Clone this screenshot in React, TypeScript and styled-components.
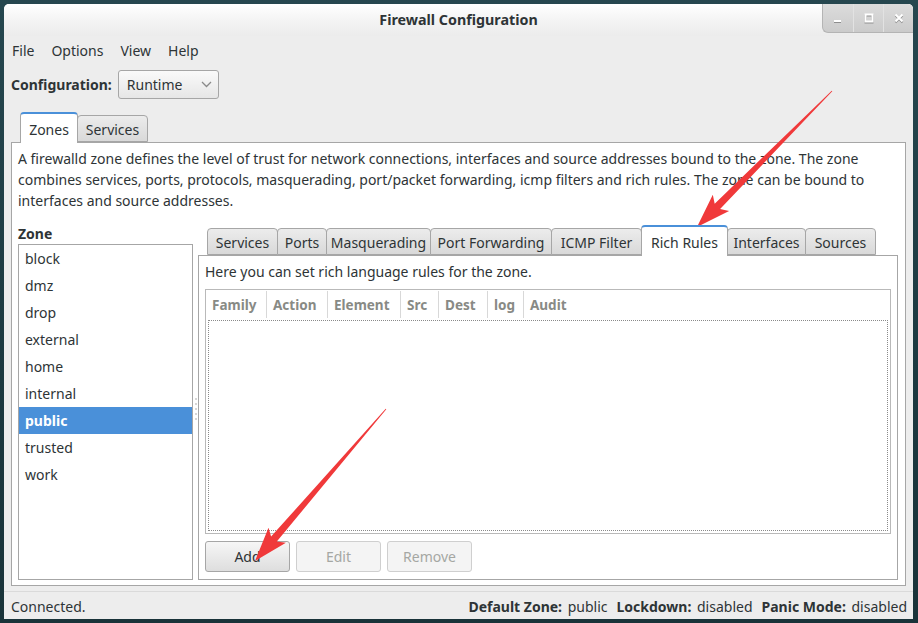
import React from "react";
import styled, { createGlobalStyle } from "styled-components";

const FONT = `"Noto Sans", "Open Sans", "DejaVu Sans", sans-serif`;
const TEXT = "#2e3436";
const BORDER = "#a6a6a6";

const Global = createGlobalStyle`
  html, body { margin: 0; padding: 0; }
  body { background: #1e3c44; font-family: ${FONT}; width: 918px; height: 623px; overflow: hidden; }
  * { box-sizing: border-box; }
`;

const Desktop = styled.div`
  position: relative;
  width: 918px;
  height: 623px;
  padding: 4px 5px 4px 4px;
  background: linear-gradient(180deg, #26474f 0%, #1c3940 60%, #193339 100%);
`;

const Window = styled.div`
  width: 909px;
  height: 615px;
  display: flex;
  flex-direction: column;
  background: #ededed;
  border-radius: 5px 5px 0 0;
  overflow: hidden;
  color: ${TEXT};
  font-size: 14px;
`;

const TitleBar = styled.div`
  height: 32px;
  flex: none;
  display: grid;
  grid-template-columns: 1fr auto 1fr;
  background: linear-gradient(180deg, #ffffff 0%, #f3f3f3 55%, #ececec 100%);
`;

const Title = styled.div`
  grid-column: 2;
  align-self: center;
  font-weight: bold;
  font-size: 14.3px;
  color: #2e3436;
  margin-top: -2px;
`;

const Controls = styled.div`
  grid-column: 3;
  justify-self: end;
  display: flex;
  height: 29px;
  border-bottom-left-radius: 6px;
  overflow: hidden;
  border-left: 1px solid #b4b4b4;
  border-bottom: 1px solid #b4b4b4;
  background: linear-gradient(180deg, #dcdcdc 0%, #cbcbcb 100%);
`;

const CtrlButton = styled.div<{ $first?: boolean }>`
  width: 30px;
  height: 100%;
  display: flex;
  align-items: center;
  justify-content: center;
  border-left: ${(p) => (p.$first ? "none" : "1px solid #e2e2e2")};
  svg { filter: drop-shadow(0 1px 0 #8e8e8e); }
`;

const MenuBar = styled.div`
  height: 28px;
  flex: none;
  display: flex;
  align-items: center;
  gap: 17px;
  padding-left: 8px;
  font-size: 14px;
`;

const MenuItem = styled.span`
  color: ${TEXT};
`;

const ConfigRow = styled.div`
  margin-top: 6px;
  height: 29px;
  flex: none;
  display: flex;
  align-items: center;
  gap: 6px;
  padding-left: 7px;
`;

const ConfigLabel = styled.span`
  font-weight: bold;
  font-size: 14px;
`;

const Combo = styled.div`
  width: 101px;
  height: 29px;
  display: flex;
  align-items: center;
  justify-content: space-between;
  padding: 0 6px 0 8px;
  border: 1px solid ${BORDER};
  border-radius: 3px;
  background: linear-gradient(180deg, #fafafa 0%, #e6e6e6 100%);
  font-size: 14px;
`;

const Notebook = styled.div<{ $outer?: boolean }>`
  display: flex;
  flex-direction: column;
  flex: 1;
  min-height: 0;
  margin: ${(p) => (p.$outer ? "13px 7px 0 7px" : "0")};
`;

const TabStrip = styled.div`
  height: 30px;
  flex: none;
  display: flex;
  align-items: flex-end;
  padding-left: 9px;
  position: relative;
  z-index: 1;
`;

const Tab = styled.div<{ $active?: boolean; $w: number }>`
  width: ${(p) => p.$w}px;
  flex: none;
  height: ${(p) => (p.$active ? 31 : 27)}px;
  margin-bottom: ${(p) => (p.$active ? -1 : 0)}px;
  display: flex;
  align-items: center;
  justify-content: center;
  border: 1px solid ${BORDER};
  border-bottom: ${(p) => (p.$active ? "none" : `1px solid ${BORDER}`)};
  border-top: ${(p) => (p.$active ? "2px solid #4a90d9" : `1px solid ${BORDER}`)};
  border-radius: 4px 4px 0 0;
  margin-right: -1px;
  background: ${(p) =>
    p.$active ? "#ffffff" : "linear-gradient(180deg, #ececec 0%, #d9d9d9 100%)"};
  color: ${TEXT};
  white-space: nowrap;
  font-size: 14px;
  padding-top: 1px;
`;

const Pane = styled.div<{ $outer?: boolean }>`
  flex: 1;
  min-height: 0;
  display: flex;
  flex-direction: column;
  background: #ffffff;
  border: 1px solid ${BORDER};
  padding: ${(p) => (p.$outer ? "5px 7px 5px 6px" : "6px 6px 6px 6px")};
`;

const Description = styled.p`
  margin: 0;
  font-size: 14px;
  line-height: 21px;
`;

const BodyRow = styled.div`
  flex: 1;
  min-height: 0;
  display: flex;
  margin-top: 14px;
`;

const ZoneColumn = styled.div`
  width: 175px;
  flex: none;
  display: flex;
  flex-direction: column;
`;

const ZoneLabel = styled.div`
  height: 19px;
  font-weight: bold;
  font-size: 14px;
  line-height: 18px;
`;

const ZoneList = styled.div`
  flex: 1;
  border: 1px solid ${BORDER};
  background: #fff;
`;

const ZoneItem = styled.div<{ $selected?: boolean }>`
  height: 27px;
  display: flex;
  align-items: center;
  padding-left: 6px;
  font-size: 14px;
  background: ${(p) => (p.$selected ? "#4a90d9" : "transparent")};
  color: ${(p) => (p.$selected ? "#ffffff" : TEXT)};
  font-weight: ${(p) => (p.$selected ? "bold" : "normal")};
`;

const Handle = styled.div`
  width: 5px;
  flex: none;
  display: flex;
  flex-direction: column;
  align-items: center;
  justify-content: center;
  gap: 3px;
  padding-top: 12px;
`;

const HandleDot = styled.span`
  width: 2px;
  height: 2px;
  border-radius: 1px;
  background: #c8c8c8;
`;

const InnerText = styled.div`
  height: 20px;
  line-height: 20px;
  font-size: 14px;
  flex: none;
`;

const Table = styled.div`
  margin-top: 7px;
  flex: 1;
  min-height: 0;
  display: flex;
  flex-direction: column;
  border: 1px solid #b9b9b9;
`;

const HeaderRow = styled.div`
  height: 29px;
  flex: none;
  display: flex;
`;

const HeaderCell = styled.div<{ $w?: number; $last?: boolean }>`
  ${(p) => (p.$w ? `width: ${p.$w}px; flex: none;` : "flex: 1;")}
  display: flex;
  align-items: center;
  padding-left: 6px;
  font-weight: bold;
  font-size: 13.5px;
  color: #888a85;
  border-right: ${(p) => (p.$last ? "none" : "1px solid #d8d8d8")};
  margin: 1px 0;
`;

const DottedArea = styled.div`
  flex: 1;
  margin: 1px 2px 2px 2px;
  border: 1px dotted #8a8a8a;
`;

const ButtonRow = styled.div`
  margin-top: 7px;
  height: 31px;
  flex: none;
  display: flex;
  gap: 7px;
  margin-bottom: 1px;
`;

const Button = styled.div<{ $disabled?: boolean }>`
  width: 85px;
  height: 31px;
  margin-right: -1px;
  display: flex;
  align-items: center;
  justify-content: center;
  border-radius: 3px;
  font-size: 14px;
  border: 1px solid ${(p) => (p.$disabled ? "#cfcfcf" : BORDER)};
  background: ${(p) =>
    p.$disabled ? "#f4f4f4" : "linear-gradient(180deg, #f6f6f6 0%, #dedede 100%)"};
  color: ${(p) => (p.$disabled ? "#a5a7a3" : TEXT)};
`;

const StatusBar = styled.div`
  height: 28px;
  flex: none;
  margin-top: 5px;
  border-top: 1px solid #dadada;
  display: flex;
  align-items: center;
  justify-content: space-between;
  padding: 2px 6px 0 7px;
  font-size: 14px;
`;

const StatusRight = styled.div`
  display: flex;
  gap: 9px;
`;

const B = styled.span`
  font-weight: bold;
  margin-right: 2px;
`;

const Overlay = styled.svg`
  position: absolute;
  left: 0;
  top: 0;
  width: 918px;
  height: 623px;
  pointer-events: none;
`;

function arrow(tx: number, ty: number, px: number, py: number) {
  const dx = px - tx;
  const dy = py - ty;
  const L = Math.hypot(dx, dy);
  const ux = dx / L;
  const uy = dy / L;
  const nx = -uy;
  const ny = ux;
  const headLen = 29;
  const headW = 11.5;
  const shaftW = 3.8;
  const bx = px - ux * headLen;
  const by = py - uy * headLen;
  const cx = px - ux * (headLen + 5);
  const cy = py - uy * (headLen + 5);
  const pts = [
    [tx + nx * 0.4, ty + ny * 0.4],
    [bx + nx * shaftW, by + ny * shaftW],
    [cx + nx * headW, cy + ny * headW],
    [px, py],
    [cx - nx * headW, cy - ny * headW],
    [bx - nx * shaftW, by - ny * shaftW],
    [tx - nx * 0.4, ty - ny * 0.4],
  ];
  return pts.map((p) => `${p[0].toFixed(1)},${p[1].toFixed(1)}`).join(" ");
}

const zones = ["block", "dmz", "drop", "external", "home", "internal", "public", "trusted", "work"];
const outerTabs = [
  { name: "Zones", w: 58 },
  { name: "Services", w: 71 },
];
const innerTabs = [
  { name: "Services", w: 71 },
  { name: "Ports", w: 50 },
  { name: "Masquerading", w: 105 },
  { name: "Port Forwarding", w: 122 },
  { name: "ICMP Filter", w: 91 },
  { name: "Rich Rules", w: 87 },
  { name: "Interfaces", w: 79 },
  { name: "Sources", w: 71 },
];
const columns: { name: string; w?: number }[] = [
  { name: "Family", w: 61 },
  { name: "Action", w: 61 },
  { name: "Element", w: 73 },
  { name: "Src", w: 38 },
  { name: "Dest", w: 49 },
  { name: "log", w: 36 },
  { name: "Audit" },
];

export default function App() {
  return (
    <>
      <Global />
      <Desktop>
        <Window>
          <TitleBar>
            <Title>Firewall Configuration</Title>
            <Controls>
              <CtrlButton $first>
                <svg width="8" height="10" viewBox="0 0 8 10">
                  <rect x="0" y="7" width="7" height="2" fill="#fff" />
                </svg>
              </CtrlButton>
              <CtrlButton>
                <svg width="10" height="10" viewBox="0 0 10 10">
                  <rect x="1.5" y="1.5" width="7" height="7" fill="none" stroke="#fff" strokeWidth="2" />
                </svg>
              </CtrlButton>
              <CtrlButton>
                <svg width="10" height="10" viewBox="0 0 10 10">
                  <path d="M1.5 1.5 L8.5 8.5 M8.5 1.5 L1.5 8.5" stroke="#fff" strokeWidth="2" />
                </svg>
              </CtrlButton>
            </Controls>
          </TitleBar>
          <MenuBar>
            <MenuItem>File</MenuItem>
            <MenuItem>Options</MenuItem>
            <MenuItem>View</MenuItem>
            <MenuItem>Help</MenuItem>
          </MenuBar>
          <ConfigRow>
            <ConfigLabel>Configuration:</ConfigLabel>
            <Combo>
              <span>Runtime</span>
              <svg width="11" height="7" viewBox="0 0 11 7">
                <path d="M1 1 L5.5 5.5 L10 1" fill="none" stroke="#8a8a8a" strokeWidth="1.3" />
              </svg>
            </Combo>
          </ConfigRow>
          <Notebook $outer>
            <TabStrip>
              {outerTabs.map((t) => (
                <Tab key={t.name} $active={t.name === "Zones"} $w={t.w}>
                  {t.name}
                </Tab>
              ))}
            </TabStrip>
            <Pane $outer>
              <Description>
                A firewalld zone defines the level of trust for network connections, interfaces and
                source addresses bound to the zone. The zone combines services, ports, protocols,
                masquerading, port/packet forwarding, icmp filters and rich rules. The zone can be
                bound to interfaces and source addresses.
              </Description>
              <BodyRow>
                <ZoneColumn>
                  <ZoneLabel>Zone</ZoneLabel>
                  <ZoneList>
                    {zones.map((z) => (
                      <ZoneItem key={z} $selected={z === "public"}>
                        {z}
                      </ZoneItem>
                    ))}
                  </ZoneList>
                </ZoneColumn>
                <Handle>
                  {[0, 1, 2, 3, 4].map((i) => (
                    <HandleDot key={i} />
                  ))}
                </Handle>
                <Notebook>
                  <TabStrip>
                    {innerTabs.map((t) => (
                      <Tab key={t.name} $active={t.name === "Rich Rules"} $w={t.w}>
                        {t.name}
                      </Tab>
                    ))}
                  </TabStrip>
                  <Pane>
                    <InnerText>Here you can set rich language rules for the zone.</InnerText>
                    <Table>
                      <HeaderRow>
                        {columns.map((c, i) => (
                          <HeaderCell key={c.name} $w={c.w} $last={i === columns.length - 1}>
                            {c.name}
                          </HeaderCell>
                        ))}
                      </HeaderRow>
                      <DottedArea />
                    </Table>
                    <ButtonRow>
                      <Button>Add</Button>
                      <Button $disabled>Edit</Button>
                      <Button $disabled>Remove</Button>
                    </ButtonRow>
                  </Pane>
                </Notebook>
              </BodyRow>
            </Pane>
          </Notebook>
          <StatusBar>
            <span>Connected.</span>
            <StatusRight>
              <span>
                <B>Default Zone:</B> public
              </span>
              <span>
                <B>Lockdown:</B> disabled
              </span>
              <span>
                <B>Panic Mode:</B> disabled
              </span>
            </StatusRight>
          </StatusBar>
        </Window>
        <Overlay viewBox="0 0 918 623">
          <polygon points={arrow(832, 91, 697, 227)} fill="#f0393a" />
          <polygon points={arrow(386, 409, 255, 561)} fill="#f0393a" />
        </Overlay>
      </Desktop>
    </>
  );
}
